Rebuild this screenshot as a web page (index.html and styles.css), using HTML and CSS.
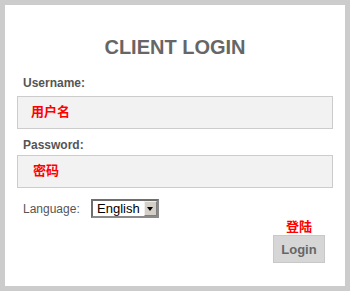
FILE: index.html
```html
<!DOCTYPE html>
<html lang="en">
<head>
    <meta charset="UTF-8">
    <meta name="viewport" content="width=device-width, initial-scale=1.0">
    <title>Client Login</title>
    <link rel="stylesheet" href="styles.css">
</head>
<body>
    <div class="login-box">
        <h1 class="title">CLIENT LOGIN</h1>

        <form class="login-form">
            <label class="field-label" for="username">Username:</label>
            <div class="field" id="username">用户名</div>

            <label class="field-label field-label-pw" for="password">Password:</label>
            <div class="field field-pw" id="password">密码</div>

            <div class="lang-row">
                <span class="lang-label">Language:</span>
                <span class="select-wrap">
                    <select class="lang-select">
                        <option>English</option>
                        <option>中文</option>
                    </select>
                    <span class="select-arrow"></span>
                </span>
            </div>

            <div class="actions">
                <span class="action-hint">登陆</span>
                <button type="button" class="login-button">Login</button>
            </div>
        </form>
    </div>
</body>
</html>
```

FILE: styles.css
```css
body {
    margin: 0;
    font-family: "Liberation Sans", Arial, sans-serif;
    background-color: #ffffff;
}

.login-box {
    box-sizing: border-box;
    width: 350px;
    height: 291px;
    border: 5px solid #cccccc;
    background-color: #ffffff;
    padding: 0 12px;
}

.title {
    margin: 30px 0 0 0;
    font-size: 20px;
    line-height: 24px;
    font-weight: bold;
    color: #666666;
    text-align: center;
}

.login-form {
    display: flex;
    flex-direction: column;
}

.field-label {
    display: block;
    margin: 17px 0 5px 6px;
    font-size: 12px;
    line-height: 15px;
    font-weight: bold;
    color: #555555;
}

.field-label-pw {
    margin-top: 9px;
    margin-bottom: 2px;
}

.field {
    box-sizing: border-box;
    height: 33px;
    border: 1px solid #cccccc;
    background-color: #f2f2f2;
    padding: 0 0 4px 13px;
    font-family: "Noto Sans CJK SC", sans-serif;
    font-size: 13px;
    line-height: 27px;
    font-weight: bold;
    color: #ff0000;
}

.field-pw {
    padding-left: 15px;
}

.lang-row {
    display: flex;
    align-items: center;
    height: 19px;
    margin: 11px 0 0 6px;
}

.lang-label {
    width: 68px;
    font-size: 12px;
    color: #555555;
}

.select-wrap {
    position: relative;
    display: inline-block;
}

.lang-select {
    appearance: none;
    -webkit-appearance: none;
    box-sizing: border-box;
    width: 68px;
    height: 19px;
    margin: 0;
    padding: 0 0 0 4px;
    border: 2px solid #6e6e6e;
    border-right-color: #8a8a8a;
    border-bottom-color: #8a8a8a;
    border-radius: 0;
    background-color: #ffffff;
    font-family: "Liberation Sans", Arial, sans-serif;
    font-size: 13px;
    color: #000000;
}

.select-arrow {
    position: absolute;
    top: 2px;
    right: 2px;
    width: 13px;
    height: 15px;
    box-sizing: border-box;
    background-color: #d4d0c8;
    border: 1px solid;
    border-color: #f0efeb #808080 #808080 #f0efeb;
    pointer-events: none;
}

.select-arrow::after {
    content: "";
    position: absolute;
    left: 2px;
    top: 5px;
    border-left: 3.5px solid transparent;
    border-right: 3.5px solid transparent;
    border-top: 4px solid #000000;
}

.actions {
    display: flex;
    flex-direction: column;
    align-items: center;
    align-self: flex-end;
    margin: 0 8px 0 0;
}

.action-hint {
    font-family: "Noto Sans CJK SC", sans-serif;
    font-size: 13px;
    line-height: 16px;
    font-weight: bold;
    color: #ff0000;
}

.login-button {
    box-sizing: border-box;
    width: 52px;
    height: 28px;
    margin-top: 1px;
    padding: 0;
    border: 1px solid #c8c8c8;
    background-color: #d6d6d6;
    font-family: "Liberation Sans", Arial, sans-serif;
    font-size: 13px;
    font-weight: bold;
    color: #666666;
    cursor: pointer;
}
```
